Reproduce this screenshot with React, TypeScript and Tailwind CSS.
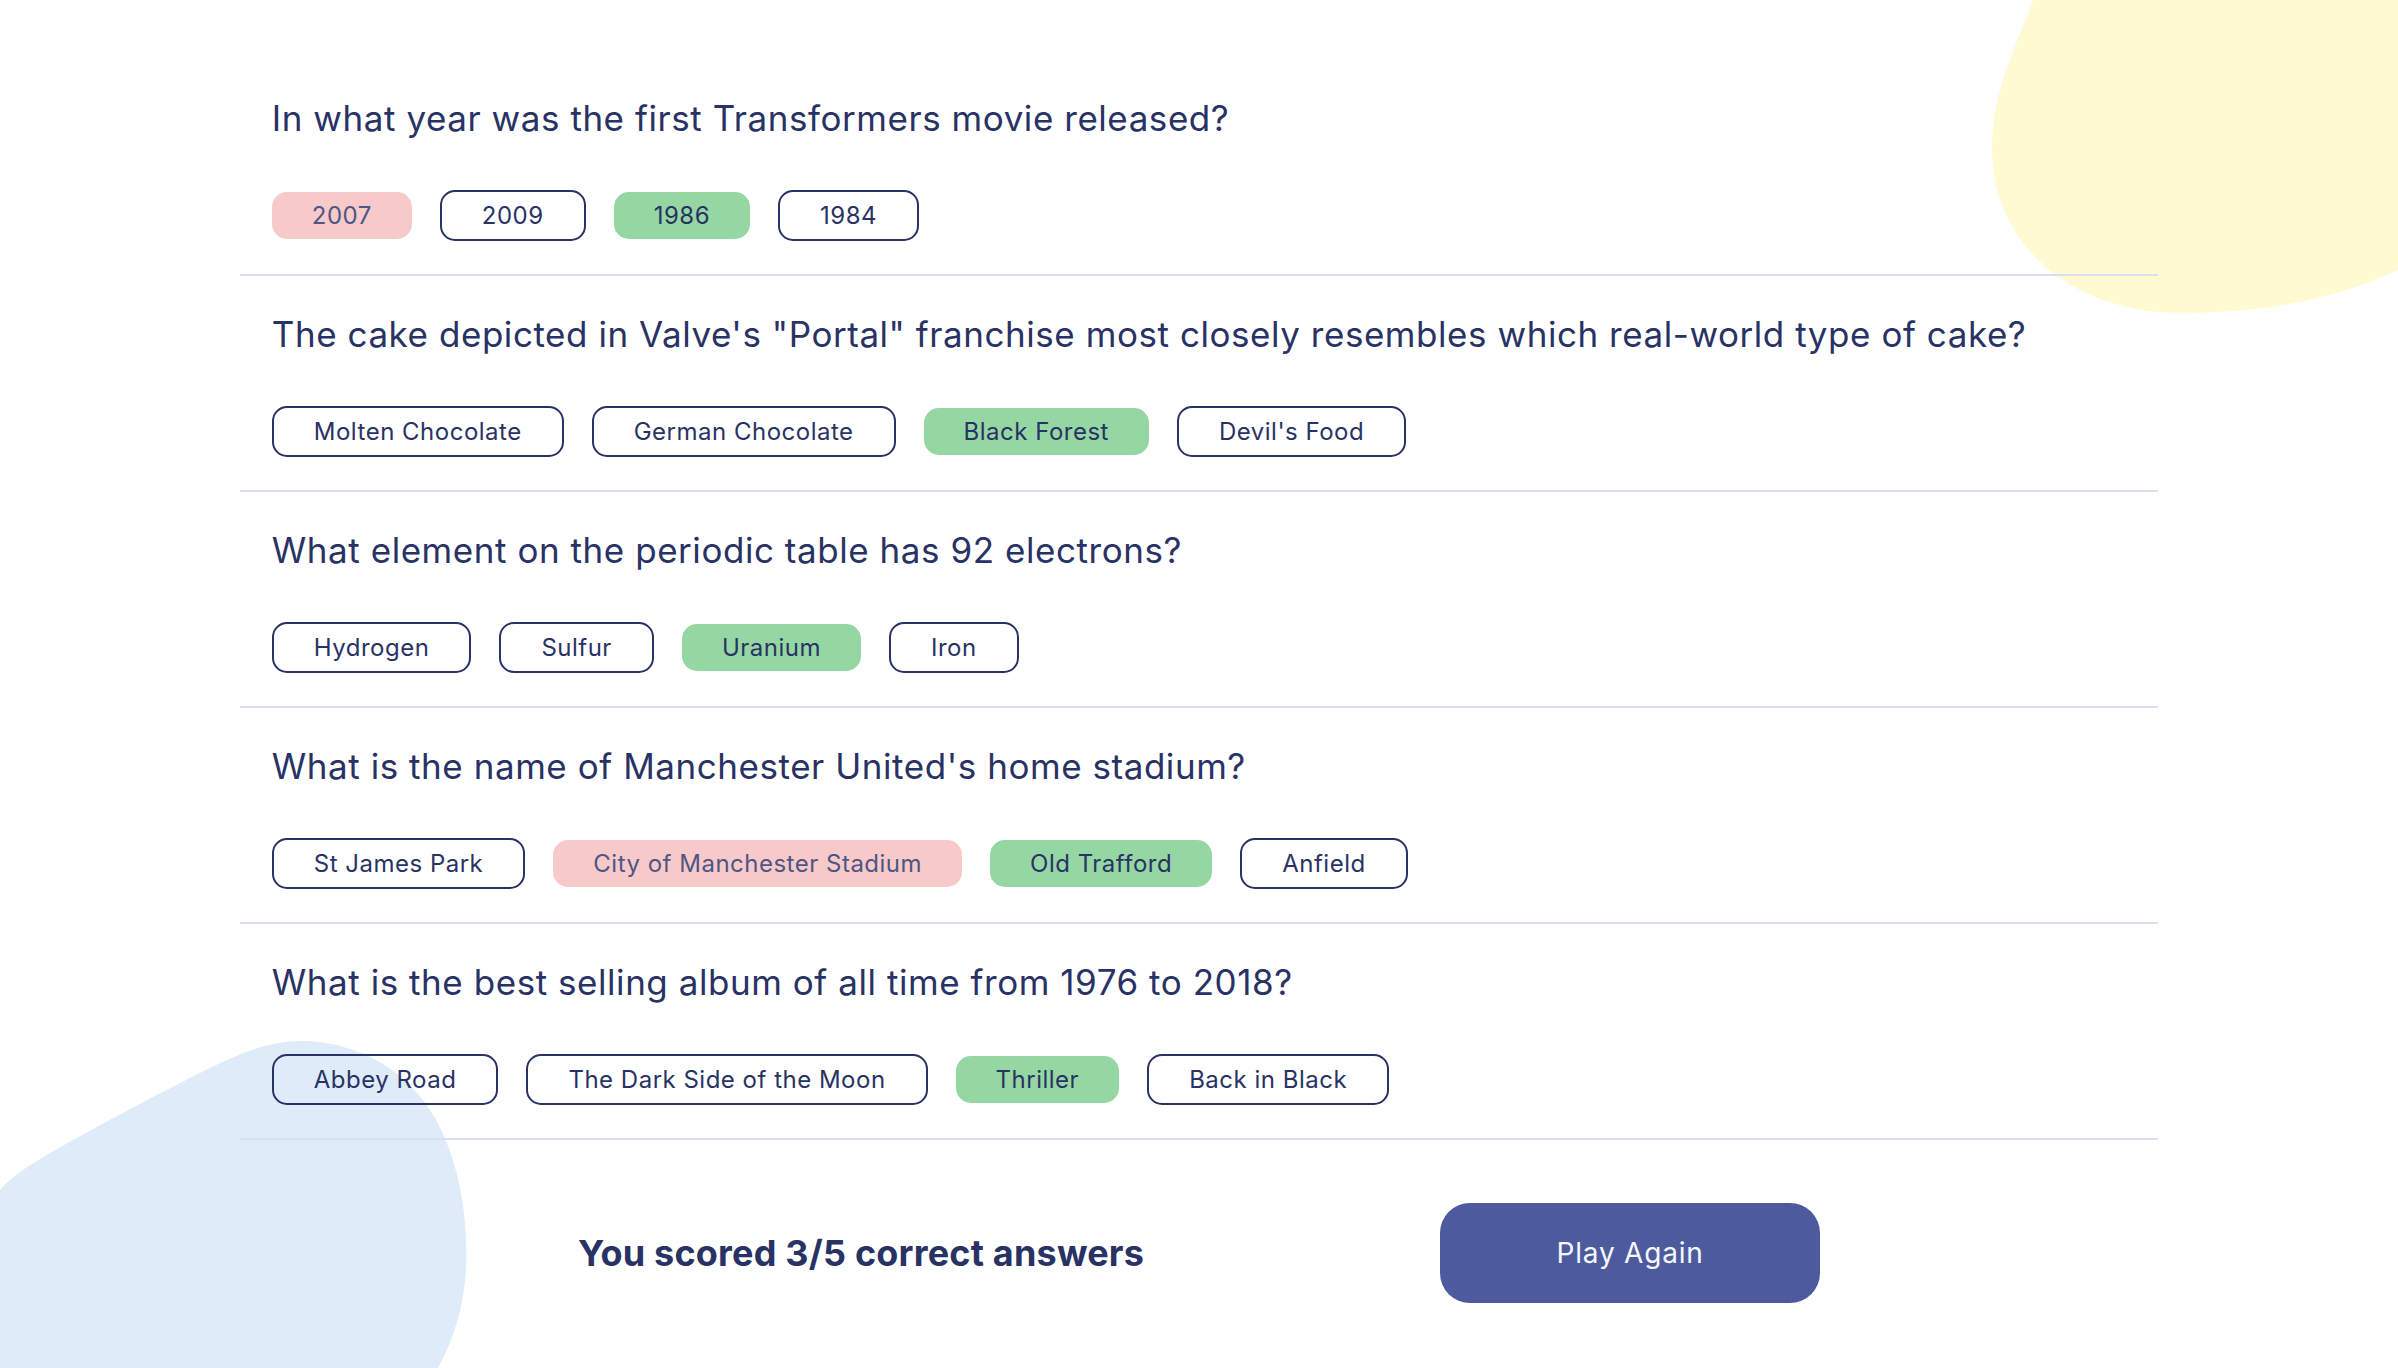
import React from 'react';

type Answer = { text: string; state: 'plain' | 'correct' | 'wrong' };

const QUESTIONS: { q: string; answers: Answer[] }[] = [
  {
    q: 'In what year was the first Transformers movie released?',
    answers: [
      { text: '2007', state: 'wrong' },
      { text: '2009', state: 'plain' },
      { text: '1986', state: 'correct' },
      { text: '1984', state: 'plain' },
    ],
  },
  {
    q: 'The cake depicted in Valve\'s "Portal" franchise most closely resembles which real-world type of cake?',
    answers: [
      { text: 'Molten Chocolate', state: 'plain' },
      { text: 'German Chocolate', state: 'plain' },
      { text: 'Black Forest', state: 'correct' },
      { text: "Devil's Food", state: 'plain' },
    ],
  },
  {
    q: 'What element on the periodic table has 92 electrons?',
    answers: [
      { text: 'Hydrogen', state: 'plain' },
      { text: 'Sulfur', state: 'plain' },
      { text: 'Uranium', state: 'correct' },
      { text: 'Iron', state: 'plain' },
    ],
  },
  {
    q: "What is the name of Manchester United's home stadium?",
    answers: [
      { text: 'St James Park', state: 'plain' },
      { text: 'City of Manchester Stadium', state: 'wrong' },
      { text: 'Old Trafford', state: 'correct' },
      { text: 'Anfield', state: 'plain' },
    ],
  },
  {
    q: 'What is the best selling album of all time from 1976 to 2018?',
    answers: [
      { text: 'Abbey Road', state: 'plain' },
      { text: 'The Dark Side of the Moon', state: 'plain' },
      { text: 'Thriller', state: 'correct' },
      { text: 'Back in Black', state: 'plain' },
    ],
  },
];

const AnswerButton: React.FC<{ a: Answer }> = ({ a }) => {
  // colored answers have no border, so they come out a bit smaller
  const look =
    a.state === 'correct'
      ? 'bg-[#95d7a2] text-[#293264] h-[47px]'
      : a.state === 'wrong'
      ? 'bg-[#f8c9c9] text-[#4d5684] h-[47px]'
      : 'border-2 border-[#293264] text-[#293264] h-[51px]';
  return (
    <button
      className={`flex items-center rounded-[15px] px-[40px] text-[24px] tracking-[0.5px] leading-none ${look}`}
    >
      {a.text}
    </button>
  );
};

export default function App() {
  return (
    <div className="relative h-screen w-full overflow-hidden bg-white font-['Inter',sans-serif] text-[#293264]">
      {/* background blobs */}
      <svg className="absolute right-0 top-0" width="420" height="320" viewBox="0 0 420 320">
        <path
          d="M55,0 C42,35 28,65 22,90 C16,112 14,130 14,150 C14,240 90,313 202,313 C290,313 360,298 420,270 L420,0 Z"
          fill="#fffad1"
        />
      </svg>
      <svg className="absolute bottom-0 left-0" width="470" height="330" viewBox="0 0 470 330">
        <path
          d="M0,152 C10,140 25,130 45,118 C90,92 150,60 200,35 C235,17 268,3 300,3 C360,3 410,35 435,80 C460,125 468,180 466,230 C464,270 452,305 438,330 L0,330 Z"
          fill="#deebf8"
        />
      </svg>

      <div className="relative mx-auto w-4/5 pt-[60px]">
        {QUESTIONS.map((item, i) => (
          <div key={i} className="border-b-2 border-[#dbdef0] px-8 pt-[37px] pb-[33px]">
            <h2 className="h-[42px] text-[35px] leading-[42px] tracking-[0.55px] font-normal">{item.q}</h2>
            <div className="mt-[51px] flex h-[51px] items-center gap-[28px]">
              {item.answers.map((a) => (
                <AnswerButton key={a.text} a={a} />
              ))}
            </div>
          </div>
        ))}

        <div className="mt-[63px] flex items-center justify-center gap-[296px]">
          <p className="text-[36px] font-bold tracking-[0.2px]">You scored 3/5 correct answers</p>
          <button className="flex h-[100px] w-[380px] items-center justify-center rounded-[30px] bg-[#4d5b9e] text-[28px] tracking-[0.8px] text-[#f5f7fb]">
            Play Again
          </button>
        </div>
      </div>
    </div>
  );
}
